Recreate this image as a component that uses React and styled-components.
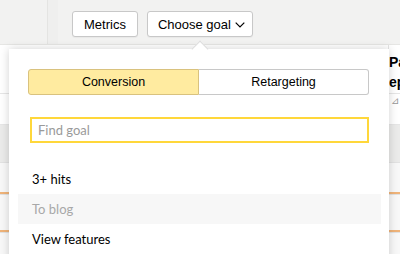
import React from "react";
import styled, { createGlobalStyle } from "styled-components";

const GlobalStyle = createGlobalStyle`
  html, body {
    margin: 0;
    padding: 0;
    background: #fff;
  }
  body {
    font-family: "Liberation Sans", Arial, sans-serif;
    color: #000;
  }
`;

const goals = [
  { id: 1, name: "3+ hits" },
  { id: 2, name: "To blog", hover: true },
  { id: 3, name: "View features" },
];

export default function App() {
  return (
    <Page>
      <GlobalStyle />
      <Header>
        <HeaderCell />
        <Toolbar>
          <Button>Metrics</Button>
          <Button $menu>
            Choose goal
            <svg width="10" height="6" viewBox="0 0 10 6" fill="none">
              <path d="M0.7 0.7 L5 5 L9.3 0.7" stroke="#000" strokeWidth="1.2" />
            </svg>
          </Button>
        </Toolbar>
      </Header>

      <Table>
        <HeadRow>
          <Cell />
          <LastCell>
            <HeadTitle>
              Page
              <br />
              epth
            </HeadTitle>
          </LastCell>
        </HeadRow>
        <SortRow>
          <Cell />
          <LastCell>
            <SortMark>⊿</SortMark>
          </LastCell>
        </SortRow>
        <Row $gray $height={38}>
          <Cell />
          <LastCell />
        </Row>
        <Row $height={32} $bar>
          <Cell />
          <LastCell />
        </Row>
        <Row $height={38} $bar>
          <Cell />
          <LastCell />
        </Row>
        <Row $height={30}>
          <Cell />
          <LastCell />
        </Row>
      </Table>

      <Popup>
        <Pointer />
        <Segments>
          <Segment $active>Conversion</Segment>
          <Segment>Retargeting</Segment>
        </Segments>
        <Search placeholder="Find goal" />
        <GoalList>
          {goals.map((g) => (
            <Goal key={g.id} $hover={g.hover}>
              {g.name}
            </Goal>
          ))}
        </GoalList>
      </Popup>
    </Page>
  );
}

const Page = styled.div`
  position: relative;
  width: 400px;
  height: 254px;
  overflow: hidden;
  background: #fff;
`;

const Header = styled.header`
  display: flex;
  height: 44px;
  background: #f2f2f1;
  border-bottom: 1px solid #e6e6e4;
`;

const HeaderCell = styled.div`
  width: 47px;
  border-right: 1px solid #e4e4e2;
  box-shadow: 10px 0 0 #efefee;
`;

const Toolbar = styled.div`
  display: flex;
  align-items: flex-start;
  gap: 9px;
  padding: 11px 0 0 24px;
`;

const Button = styled.button`
  display: flex;
  align-items: center;
  gap: 4px;
  height: 26px;
  padding: ${(p) => (p.$menu ? "0 7px 0 10px" : "0 11px")};
  background: #fff;
  border: 1px solid #c8c8c8;
  border-radius: 3px;
  font-family: "Liberation Sans", Arial, sans-serif;
  font-size: 13px;
  color: #000;
  box-shadow: 0 1px 1px rgba(0, 0, 0, 0.04);

  svg {
    margin-top: 1px;
  }
`;

const Table = styled.div`
  display: flex;
  flex-direction: column;
`;

const Row = styled.div`
  display: flex;
  height: ${(p) => p.$height}px;
  background: ${(p) => (p.$gray ? "#ebebea" : "#f8f8f8")};
  border-bottom: 1px solid #e2e2e2;
  box-shadow: ${(p) => (p.$bar ? "inset 0 -3px 0 -1px #f0b47a" : "none")};
  box-sizing: border-box;
`;

const HeadRow = styled.div`
  display: flex;
  height: 48px;
  background: #fff;
`;

const SortRow = styled.div`
  display: flex;
  height: 30px;
  background: #fff;
  border-top: 1px solid #e6e6e6;
  border-bottom: 1px solid #e6e6e6;
`;

const Cell = styled.div`
  flex: 1;
`;

const LastCell = styled.div`
  width: 11px;
  border-left: 1px solid #e4e4e4;
`;

const HeadTitle = styled.div`
  padding-top: 7px;
  font-family: "Liberation Sans", Arial, sans-serif;
  font-weight: bold;
  font-size: 14px;
  line-height: 20px;
  white-space: nowrap;
`;

const SortMark = styled.span`
  display: block;
  padding: 1px 0 0 2px;
  font-size: 10px;
  color: #999;
`;

const Popup = styled.div`
  position: absolute;
  left: 9px;
  top: 49px;
  width: 380px;
  height: 230px;
  background: #fff;
  box-shadow: 0 0 9px rgba(0, 0, 0, 0.18);
  padding: 20px 20px 0 19px;
  box-sizing: border-box;
`;

const Pointer = styled.div`
  position: absolute;
  left: 185px;
  top: -6px;
  width: 11px;
  height: 11px;
  background: #fff;
  transform: rotate(45deg);
  border-left: 1px solid #dcdcdc;
  border-top: 1px solid #dcdcdc;
`;

const Segments = styled.div`
  display: flex;
  height: 26px;
`;

const Segment = styled.button`
  flex: 1;
  padding: 0;
  background: ${(p) => (p.$active ? "#ffeba0" : "#fff")};
  border: 1px solid ${(p) => (p.$active ? "#d9c27e" : "#c8c8c8")};
  border-radius: ${(p) => (p.$active ? "3px 0 0 3px" : "0 3px 3px 0")};
  ${(p) => !p.$active && "border-left: none;"}
  font-family: "Liberation Sans", Arial, sans-serif;
  font-size: 12.5px;
  color: #000;
`;

const Search = styled.input`
  display: block;
  width: 339px;
  height: 26px;
  margin: 22px 0 0 2px;
  padding: 0 6px;
  box-sizing: border-box;
  border: 2px solid #ffd73a;
  outline: none;
  font-family: Lato, "Liberation Sans", sans-serif;
  font-size: 13px;
  color: #000;

  &::placeholder {
    color: #9a9a9a;
  }
`;

const GoalList = styled.ul`
  list-style: none;
  margin: 21px 0 0 -10px;
  padding: 0;
  width: 363px;
`;

const Goal = styled.li`
  height: 30px;
  display: flex;
  align-items: center;
  padding-left: 14px;
  font-family: Lato, "Liberation Sans", sans-serif;
  font-size: 13px;
  color: ${(p) => (p.$hover ? "#a8a8a8" : "#000")};
  background: ${(p) => (p.$hover ? "#f7f7f7" : "transparent")};
`;
